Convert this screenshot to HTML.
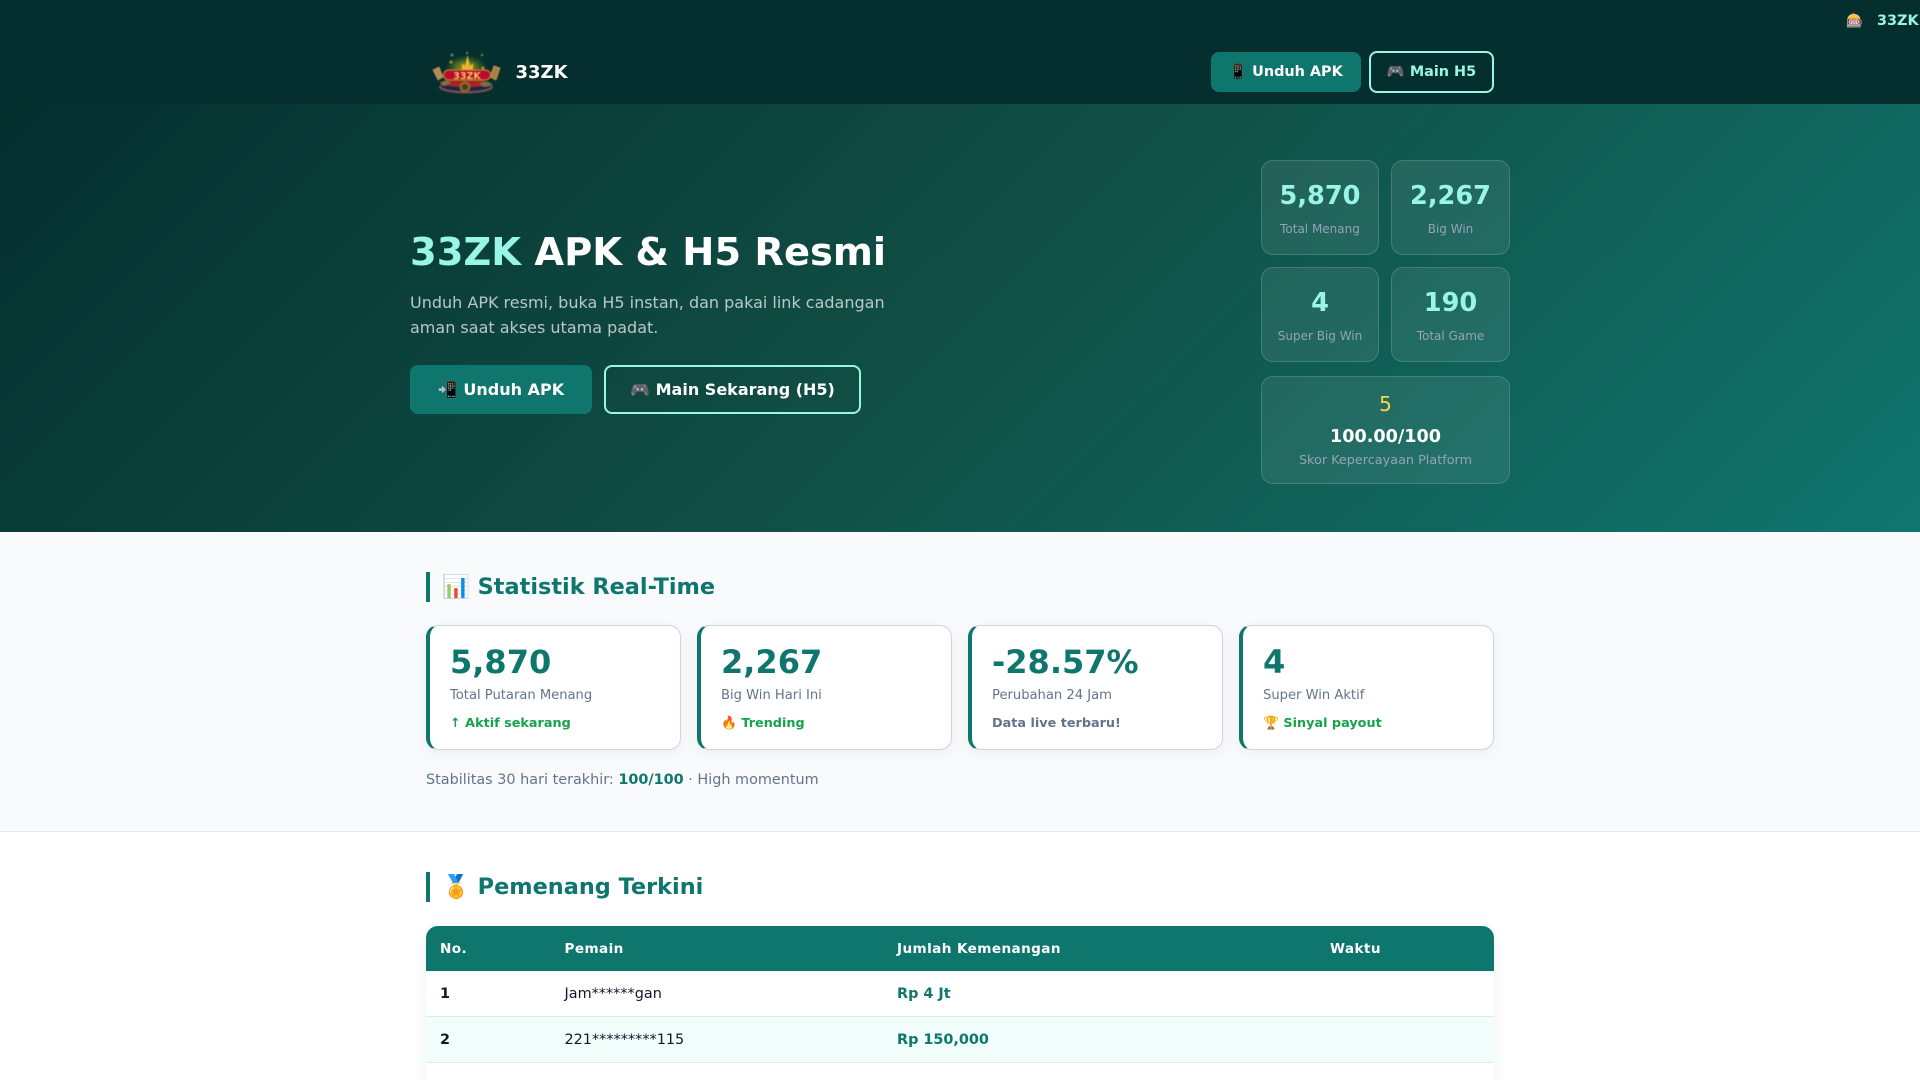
<!DOCTYPE html>
<html lang="id">
<head>
<meta charset="utf-8">
<title>33ZK APK &amp; H5 Resmi</title>
<style>
*{box-sizing:border-box;margin:0;padding:0}
html,body{width:1920px;height:1080px;overflow:hidden;background:#fff}
body{font-family:"DejaVu Sans","Liberation Sans",sans-serif;position:relative;color:#0f172a}
.a{position:absolute;white-space:nowrap}
header{position:absolute;left:0;top:0;width:1920px;height:104px;background:#042f2e}
.btn{position:absolute;display:flex;align-items:center;justify-content:center;font-weight:700;white-space:nowrap}
.hero{position:absolute;left:0;top:104px;width:1920px;height:428px;background:linear-gradient(135deg,#042f2e 0%,#114f45 50%,#0f766e 100%)}
.hc{position:absolute;background:rgba(255,255,255,.08);border:1px solid rgba(255,255,255,.15);border-radius:12px;text-align:center}
.hc b{position:absolute;left:0;right:0;top:20px;font-size:25.6px;line-height:31px;color:#99f6e4}
.hc span{position:absolute;left:0;right:0;top:60px;font-size:12px;line-height:16px;color:#94a3b8}
.stats{position:absolute;left:0;top:532px;width:1920px;height:300px;background:#f8fafc;border-bottom:1px solid #e2e8f0}
h2{position:absolute;left:426px;border-left:4px solid #0f766e;padding-left:12px;height:30px;font-size:22.4px;line-height:30px;font-weight:700;color:#0f766e;white-space:nowrap}
.card{position:absolute;top:625px;width:255px;height:125px;background:#fff;border:1px solid #cbd5e1;border-left:4px solid #0f766e;border-radius:12px;box-shadow:0 4px 16px rgba(15,23,42,.05)}
.card b.n{position:absolute;left:20px;top:17px;font-size:32px;line-height:38px;color:#0f766e;white-space:nowrap}
.card span{position:absolute;left:20px;top:61px;font-size:13.12px;line-height:18px;color:#64748b;white-space:nowrap}
.card i{position:absolute;left:20px;top:89px;font-style:normal;font-weight:700;font-size:12.8px;line-height:18px;color:#16a34a;white-space:nowrap}
.tbl{position:absolute;left:426px;top:926px;width:1068px;height:200px;background:#fff;border-radius:12px 12px 0 0;overflow:hidden;box-shadow:0 4px 16px rgba(15,23,42,.06)}
.tw{position:absolute;left:0;top:0;width:1920px;height:1080px;overflow:hidden}
.r{position:absolute;left:0;width:1068px}
.r div{position:absolute;white-space:nowrap;font-size:14.4px;line-height:18px}
.r.h div{font-size:13.6px;letter-spacing:.4px;font-weight:700;top:14px}
</style>
</head>
<body>
<header>
  <div class="a" style="left:1846px;top:12px;font-size:14px;line-height:18px;font-weight:700;color:#99f6e4">🎰</div>
  <div class="a" style="left:1877px;top:12px;font-size:14.4px;line-height:18px;font-weight:700;color:#99f6e4;width:43px;overflow:hidden">33ZK</div>
  <svg class="a" style="left:425px;top:40px" width="90" height="65" viewBox="0 0 90 65">
    <defs>
      <radialGradient id="g" cx="50%" cy="60%" r="50%"><stop offset="0" stop-color="#a89c20"/><stop offset=".5" stop-color="#4a6d1f"/><stop offset="1" stop-color="#1c4a26" stop-opacity="0"/></radialGradient>
    </defs>
    <g filter="blur(.4px)">
      <ellipse cx="41" cy="25" rx="22" ry="13" fill="url(#g)"/>
      <path d="M37 30 L37 23 L40 26 L42.500 15 L45 26 L48 23 L48 30Z" fill="#efb235"/>
      <circle cx="26" cy="22" r="1.500" fill="#b98a2a"/><circle cx="58" cy="28" r="1.500" fill="#c79127"/><circle cx="57" cy="15" r="1.300" fill="#4e7e6b"/><circle cx="27" cy="15" r="1.500" fill="#6c7d66"/><circle cx="42" cy="13" r="1" fill="#a9a355"/>
      <path d="M8 30 l6 -3 l4 10 l-5 3z" fill="#b08d5e" stroke="#c9963f" stroke-width=".7"/>
      <path d="M75 28 l-6 -2 l-4 11 l6 3z" fill="#a5804f" stroke="#d9a439" stroke-width=".7"/>
      <ellipse cx="41" cy="47" rx="27" ry="6.500" fill="#7a5240"/>
      <ellipse cx="41" cy="46" rx="25" ry="5.200" fill="#1d2350"/>
      <path d="M22 39 h38 l-2 7 q-17 3 -34 0z" fill="#a3271f"/>
      <path d="M15 43 q7 -5 11 0 q-3 3 -8 3z" fill="#8a6b3b"/>
      <path d="M54 44 q7 -5 13 0 q-2 3 -8 3z" fill="#7d6a4a"/>
      <rect x="18.500" y="30" width="47" height="10" rx="5" fill="#bb0a30" stroke="#c9962f" stroke-width="1"/>
      <text x="42" y="39" text-anchor="middle" font-family="'DejaVu Sans',sans-serif" font-size="9.500" font-weight="700" fill="#ecc860">33ZK</text>
      <circle cx="40" cy="47" r="5.500" fill="#8a6a30"/><circle cx="40" cy="47" r="3" fill="#4d3a1c"/>
    </g>
  </svg>
  <div class="a" style="left:515.500px;top:61px;font-size:18px;line-height:24px;font-weight:700;color:#fff">33ZK</div>
  <div class="btn" style="left:1211px;top:52px;width:150px;height:40px;padding-bottom:1px;background:#0f766e;border-radius:8px;color:#fff;font-size:14.4px">📱 Unduh APK</div>
  <div class="btn" style="left:1369px;top:51px;width:125px;height:42px;padding-bottom:1px;border:2px solid #99f6e4;border-radius:8px;color:#99f6e4;font-size:14.4px">🎮 Main H5</div>
</header>

<section class="hero">
  <h1 class="a" style="left:410px;top:124px;font-size:38.4px;line-height:49px;font-weight:700;color:#fff"><span style="color:#99f6e4">33ZK</span> APK &amp; H5 Resmi</h1>
  <p class="a" style="left:410px;top:186px;font-size:16px;line-height:25px;color:rgba(255,255,255,.7)">Unduh APK resmi, buka H5 instan, dan pakai link cadangan<br>aman saat akses utama padat.</p>
  <div class="btn" style="left:410px;top:261px;width:182px;height:49px;background:#0f766e;border-radius:8px;color:#fff;font-size:16px">📲 Unduh APK</div>
  <div class="btn" style="left:604px;top:261px;width:257px;height:49px;border:2px solid #99f6e4;border-radius:8px;color:#fff;font-size:16px">🎮 Main Sekarang (H5)</div>

  <div class="hc" style="left:1261px;top:56px;width:118px;height:95px"><b>5,870</b><span>Total Menang</span></div>
  <div class="hc" style="left:1391px;top:56px;width:119px;height:95px"><b>2,267</b><span>Big Win</span></div>
  <div class="hc" style="left:1261px;top:163px;width:118px;height:95px"><b>4</b><span>Super Big Win</span></div>
  <div class="hc" style="left:1391px;top:163px;width:119px;height:95px"><b>190</b><span>Total Game</span></div>
  <div class="hc" style="left:1261px;top:272px;width:249px;height:108px">
    <div style="position:absolute;left:0;right:0;top:15px;font-size:20px;line-height:24px;color:#fcd34d">5</div>
    <div style="position:absolute;left:0;right:0;top:49px;font-size:17.6px;line-height:22px;font-weight:700;color:#fff">100.00/100</div>
    <div style="position:absolute;left:0;right:0;top:75px;font-size:12.8px;line-height:18px;color:#94a3b8">Skor Kepercayaan Platform</div>
  </div>
</section>

<section class="stats"></section>
<h2 style="top:572px">📊 Statistik Real-Time</h2>
<div class="card" style="left:426px"><b class="n">5,870</b><span>Total Putaran Menang</span><i>↑ Aktif sekarang</i></div>
<div class="card" style="left:697px"><b class="n">2,267</b><span>Big Win Hari Ini</span><i>🔥 Trending</i></div>
<div class="card" style="left:968px"><b class="n">-28.57%</b><span>Perubahan 24 Jam</span><i style="color:#64748b">Data live terbaru!</i></div>
<div class="card" style="left:1239px"><b class="n">4</b><span>Super Win Aktif</span><i>🏆 Sinyal payout</i></div>
<p class="a" style="left:426px;top:770px;font-size:14.4px;line-height:20px;color:#64748b">Stabilitas 30 hari terakhir: <b style="color:#0f766e">100/100</b> · High momentum</p>

<h2 style="top:872px">🏅 Pemenang Terkini</h2>
<div class="tw">
<div class="tbl">
  <div class="r h" style="top:0;height:45px;background:#0f766e;color:#fff">
    <div style="left:14px">No.</div>
    <div style="left:138.500px">Pemain</div>
    <div style="left:471px">Jumlah Kemenangan</div>
    <div style="left:904px">Waktu</div>
  </div>
  <div class="r" style="top:45px;height:46px;background:#fff;border-bottom:1px solid #e2e8f0">
    <div style="left:14px;top:14px;font-weight:700">1</div>
    <div style="left:138.500px;top:14px">Jam******gan</div>
    <div style="left:471px;top:14px;font-weight:700;color:#0f766e">Rp 4 Jt</div>
  </div>
  <div class="r" style="top:91px;height:46px;background:#f0fdfa;border-bottom:1px solid #e2e8f0">
    <div style="left:14px;top:14px;font-weight:700">2</div>
    <div style="left:138.500px;top:14px">221*********115</div>
    <div style="left:471px;top:14px;font-weight:700;color:#0f766e">Rp 150,000</div>
  </div>
</div>
</div>
</body>
</html>
